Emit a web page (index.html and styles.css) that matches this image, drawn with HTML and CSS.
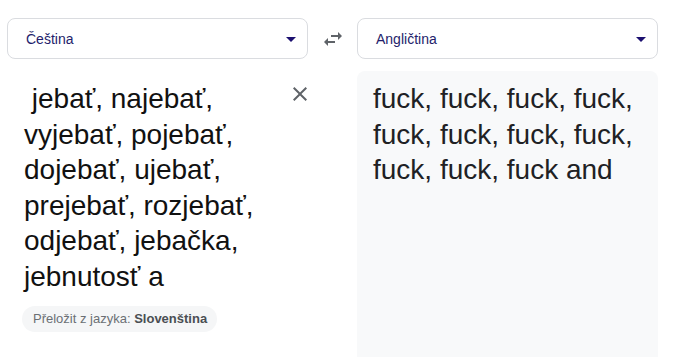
FILE: index.html
```html
<!DOCTYPE html>
<html>
<head>
  <link rel="stylesheet" href="styles.css">
</head>
<body>
  <div class="translator">
    <div class="lang-select">
      <span class="lang-name">Čeština</span>
      <span class="caret"></span>
    </div>
    <div class="swap">
      <svg width="24" height="24" viewBox="0 0 24 24"><path d="M6.99 11L3 15l3.99 4v-3H14v-2H6.99v-3zM21 9l-3.99-4v3H10v2h7.01v3L21 9z" fill="#5f6368"/></svg>
    </div>
    <div class="lang-select">
      <span class="lang-name">Angličtina</span>
      <span class="caret"></span>
    </div>

    <div class="source">
      <div class="source-body">
        <div class="source-text"> jebať, najebať, vyjebať, pojebať, dojebať, ujebať, prejebať, rozjebať, odjebať, jebačka, jebnutosť a</div>
        <div class="detected">Přeložit z jazyka: <b>Slovenština</b></div>
      </div>
      <div class="clear">
        <svg width="24" height="24" viewBox="0 0 24 24"><path d="M19 6.41L17.59 5 12 10.59 6.41 5 5 6.41 10.59 12 5 17.59 6.41 19 12 13.41 17.59 19 19 17.59 13.41 12z" fill="#5f6368"/></svg>
      </div>
    </div>
    <div></div>
    <div class="target">
      <div class="target-text">fuck, fuck, fuck, fuck, fuck, fuck, fuck, fuck, fuck, fuck, fuck and</div>
    </div>
  </div>
</body>
</html>
```

FILE: styles.css
```css
html, body {
  margin: 0;
  background: #fff;
  overflow: hidden;
}

body {
  font-family: "Liberation Sans", Arial, sans-serif;
}

.translator {
  display: grid;
  grid-template-columns: 301px 49px 301px;
  row-gap: 12px;
  padding: 18px 0 0 7px;
}

.lang-select {
  height: 41px;
  box-sizing: border-box;
  border: 1px solid #dadce0;
  border-radius: 8px;
  display: flex;
  align-items: center;
  justify-content: space-between;
  padding: 0 11px 0 18px;
}

.lang-name {
  font-size: 14px;
  color: #241d6b;
}

.caret {
  width: 0;
  height: 0;
  border-left: 5px solid transparent;
  border-right: 5px solid transparent;
  border-top: 5px solid #1c1070;
  margin-top: 1px;
}

.swap {
  display: flex;
  align-items: center;
  justify-content: center;
  padding-left: 1px;
}

.source {
  display: flex;
  justify-content: space-between;
}

.source-body {
  padding: 10px 0 0 17px;
}

.source-text {
  width: 238px;
  font-size: 28px;
  line-height: 35.5px;
  color: #111;
  white-space: pre-wrap;
}

.detected {
  display: inline-block;
  margin: 12px 0 0 -2px;
  height: 26px;
  line-height: 26px;
  padding: 0 10px 0 11px;
  border-radius: 13px;
  background: #f5f6f7;
  font-size: 13px;
  color: #6b6f74;
}

.detected b {
  color: #4a4e53;
}

.clear {
  width: 24px;
  height: 24px;
  margin: 11px -4px 0 0;
}

.target {
  height: 286px;
  box-sizing: border-box;
  background: #f8f9fa;
  border-radius: 8px 8px 0 0;
  padding: 10px 16px 0 16px;
}

.target-text {
  font-size: 28px;
  line-height: 35.5px;
  color: #202124;
}
```
